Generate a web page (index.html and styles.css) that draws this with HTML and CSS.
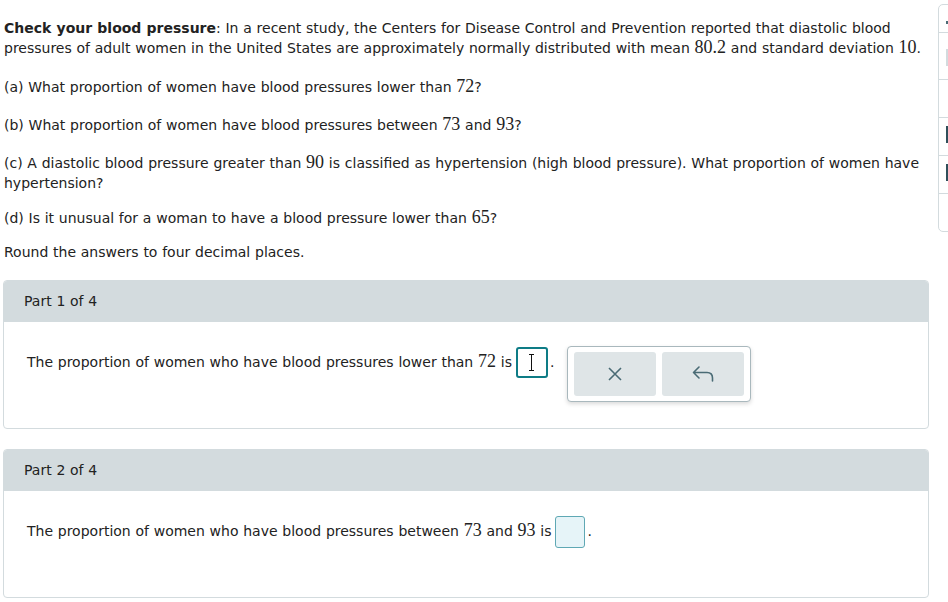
FILE: index.html
```html
<!DOCTYPE html>
<html>
<head>
<meta charset="utf-8">
<link rel="stylesheet" href="styles.css">
</head>
<body>
<div class="page">
  <div class="intro">
    <p class="first"><b>Check your blood pressure</b>: In a recent study, the Centers for Disease Control and Prevention reported that diastolic blood pressures of adult women in the United States are approximately normally distributed with mean <span class="m">80.2</span> and standard deviation <span class="m">10</span>.</p>
    <p class="qa">(a) What proportion of women have blood pressures lower than <span class="m">72</span>?</p>
    <p class="qb">(b) What proportion of women have blood pressures between <span class="m">73</span> and <span class="m">93</span>?</p>
    <p class="qc">(c) A diastolic blood pressure greater than <span class="m">90</span> is classified as hypertension (high blood pressure). What proportion of women have hypertension?</p>
    <p class="qd">(d) Is it unusual for a woman to have a blood pressure lower than <span class="m">65</span>?</p>
    <p class="round">Round the answers to four decimal places.</p>
  </div>

  <section class="part">
    <div class="part-head">Part 1 of 4</div>
    <div class="part-body">
      <div class="answer">
        <span class="txt">The proportion of women who have blood pressures lower than <span class="m">72</span> is</span>
        <span class="box active"><span class="caret"></span></span>
        <span class="period">.</span>
        <div class="tools">
          <button class="tool" aria-label="clear">
            <svg width="16" height="16" viewBox="0 0 16 16"><path d="M2 2 L14 14 M14 2 L2 14" stroke="#4a6b75" stroke-width="1.6" fill="none"/></svg>
          </button>
          <button class="tool" aria-label="undo">
            <svg width="24" height="18" viewBox="0 0 24 18"><path d="M8 2 L2.5 7.5 L8 13 M2.5 7.5 H16 Q21.5 7.5 21.5 13 V16" stroke="#4a6b75" stroke-width="1.6" fill="none" stroke-linecap="round" stroke-linejoin="round"/></svg>
          </button>
        </div>
      </div>
    </div>
  </section>

  <section class="part">
    <div class="part-head">Part 2 of 4</div>
    <div class="part-body">
      <div class="answer">
        <span class="txt">The proportion of women who have blood pressures between <span class="m">73</span> and <span class="m">93</span> is</span>
        <span class="box light"></span>
        <span class="period">.</span>
      </div>
    </div>
  </section>
</div>

<div class="side">
  <div class="side-row first"><span class="dot"></span></div>
  <div class="side-row tall"><span class="bar light"></span></div>
  <div class="side-row"></div>
  <div class="side-row"><span class="bar"></span></div>
  <div class="side-row"><span class="bar"></span></div>
  <div class="side-row last"></div>
</div>
</body>
</html>
```

FILE: styles.css
```css
html, body {
  margin: 0;
  padding: 0;
  background: #ffffff;
}
body {
  font-family: "DejaVu Sans", Verdana, sans-serif;
  font-size: 14px;
  color: #222222;
  word-spacing: 0.3px;
  overflow: hidden;
}
.page {
  width: 926px;
  padding: 18px 0 0 3px;
}
.intro {
  padding-left: 1px;
  margin-right: -4px;
}
.intro p {
  margin: 0;
  line-height: 20px;
}
.intro .first { margin-bottom: 19px; }
.intro .qa { margin-bottom: 18px; }
.intro .qb { margin-bottom: 18px; }
.intro .qc { margin-bottom: 15px; }
.intro .qd { margin-bottom: 14px; }
.intro .round { margin-bottom: 18px; }
.m {
  font-family: "Liberation Serif", "DejaVu Serif", serif;
  font-size: 18px;
  line-height: 1;
  word-spacing: 0;
}
.part {
  border: 1px solid #d3dbde;
  border-radius: 4px;
  margin-bottom: 20px;
}
.part-head {
  background: #d3dbde;
  height: 41px;
  line-height: 41px;
  padding-left: 20px;
  border-radius: 3px 3px 0 0;
}
.part-body {
  height: 106px;
  padding: 24px 0 0 23px;
  box-sizing: border-box;
}
.answer {
  display: flex;
  align-items: flex-start;
}
.txt {
  white-space: nowrap;
  line-height: 31px;
  margin-top: 1px;
  margin-right: 4px;
}
.period {
  line-height: 31px;
  margin-top: 1px;
  margin-left: 2px;
}
.box {
  display: block;
  border-radius: 3px;
  box-sizing: border-box;
  position: relative;
  margin-top: 1px;
}
.box.active {
  border: 2px solid #0e7c86;
  width: 32px;
  height: 31px;
}
.box.light {
  border: 1px solid #5fa8b4;
  background: #e6f4f8;
  width: 30px;
  height: 32px;
}
.caret {
  position: absolute;
  left: 13px;
  top: 5px;
  width: 1px;
  height: 17px;
  background: #111;
}
.caret::before, .caret::after {
  content: "";
  position: absolute;
  left: -2px;
  width: 5px;
  height: 1px;
  background: #111;
}
.caret::before { top: 0; }
.caret::after { bottom: 0; }
.tools {
  display: flex;
  gap: 6px;
  margin-left: 13px;
  padding: 5px 6px 5px 6px;
  border: 1px solid #a9b8bd;
  border-radius: 4px;
  background: #fff;
  box-shadow: 0 2px 4px rgba(0,0,0,0.15);
}
.tool {
  width: 82px;
  height: 44px;
  border: none;
  border-radius: 3px;
  background: #dfe5e7;
  display: flex;
  align-items: center;
  justify-content: center;
  padding: 0;
}
.side {
  position: absolute;
  left: 938px;
  top: 4px;
  width: 30px;
  height: 228px;
  border: 1px solid #d3dbde;
  border-radius: 5px;
  box-sizing: border-box;
}
.side-row {
  height: 38px;
  border-bottom: 1px solid #d3dbde;
  position: relative;
  box-sizing: border-box;
}
.side-row.first { height: 28px; }
.side-row.tall { height: 47px; }
.side-row.last { border-bottom: none; }
.dot {
  position: absolute;
  left: 7px;
  top: 16px;
  width: 2px;
  height: 3px;
  background: #4a6b75;
}
.bar {
  position: absolute;
  left: 7px;
  top: 8px;
  width: 2px;
  height: 17px;
  background: #2f4f5a;
}
.bar.light { background: #d3dbde; top: 16px; }
```
